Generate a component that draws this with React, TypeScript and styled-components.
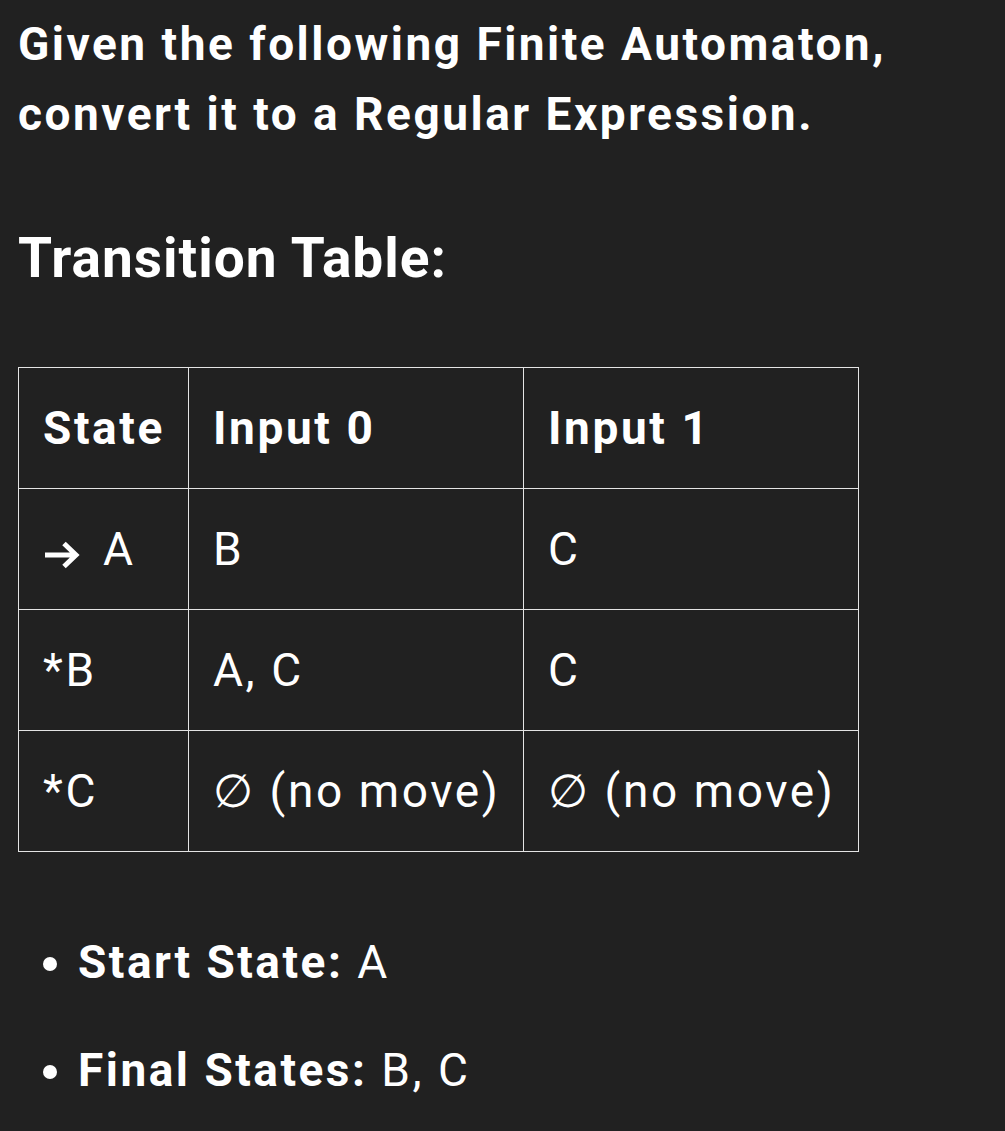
import React from "react";
import styled, { createGlobalStyle } from "styled-components";

const Global = createGlobalStyle`
  html, body {
    margin: 0;
    padding: 0;
    background: #212121;
  }
  body {
    font-family: Roboto, "Liberation Sans", Arial, sans-serif;
    color: #ffffff;
  }
`;

const Page = styled.main`
  box-sizing: border-box;
  width: 1005px;
  min-height: 1131px;
  padding: 9px 18px 0 18px;
  background: #212121;
`;

const Intro = styled.p`
  margin: 0;
  font-size: 46px;
  font-weight: 700;
  line-height: 70px;
  letter-spacing: 2.5px;
  white-space: nowrap;
`;

const Heading = styled.h3`
  margin: 76px 0 0 0;
  font-size: 55px;
  font-weight: 700;
  line-height: 66px;
  letter-spacing: 1px;
`;

const Table = styled.table`
  margin-top: 76px;
  border-collapse: collapse;
  font-size: 46px;
  letter-spacing: 2.6px;
`;

const Cell = styled.td<{ $w: number; $head?: boolean }>`
  box-sizing: border-box;
  width: ${(p) => p.$w}px;
  height: 121px;
  padding: 0 0 0 24px;
  border: 1px solid #e4e4e4;
  vertical-align: middle;
  text-align: left;
  font-weight: ${(p) => (p.$head ? 700 : 400)};
  white-space: nowrap;
`;

const ArrowGlyph = styled.svg`
  width: 38px;
  height: 30px;
  margin-right: 22px;
  vertical-align: -5px;
`;

const List = styled.ul`
  margin: 78px 0 0 0;
  padding: 0 0 0 60px;
  font-size: 46px;
  letter-spacing: 2.5px;
`;

const Item = styled.li`
  line-height: 64px;
  margin-bottom: 44px;
`;

const Strong = styled.strong`
  font-weight: 700;
`;

const widths = [170, 335, 335];

const Arrow = () => (
  <ArrowGlyph viewBox="0 0 38 30" role="img" aria-label="→">
    <path
      d="M2 15 H33 M21 3.5 L33 15 L21 26.5"
      fill="none"
      stroke="#ffffff"
      strokeWidth={5}
      strokeLinejoin="miter"
    />
  </ArrowGlyph>
);

const rows: React.ReactNode[][] = [
  [
    <>
      <Arrow />A
    </>,
    "B",
    "C",
  ],
  ["*B", "A, C", "C"],
  ["*C", "∅ (no move)", "∅ (no move)"],
];

export default function App() {
  return (
    <Page>
      <Global />
      <Intro>
        Given the following Finite Automaton,
        <br />
        convert it to a Regular Expression.
      </Intro>
      <Heading>Transition Table:</Heading>
      <Table>
        <thead>
          <tr>
            {["State", "Input 0", "Input 1"].map((h, i) => (
              <Cell as="th" key={h} $w={widths[i]} $head>
                {h}
              </Cell>
            ))}
          </tr>
        </thead>
        <tbody>
          {rows.map((r, ri) => (
            <tr key={ri}>
              {r.map((c, ci) => (
                <Cell key={ci} $w={widths[ci]}>
                  {c}
                </Cell>
              ))}
            </tr>
          ))}
        </tbody>
      </Table>
      <List>
        <Item>
          <Strong>Start State:</Strong> A
        </Item>
        <Item>
          <Strong>Final States:</Strong> B, C
        </Item>
      </List>
    </Page>
  );
}
